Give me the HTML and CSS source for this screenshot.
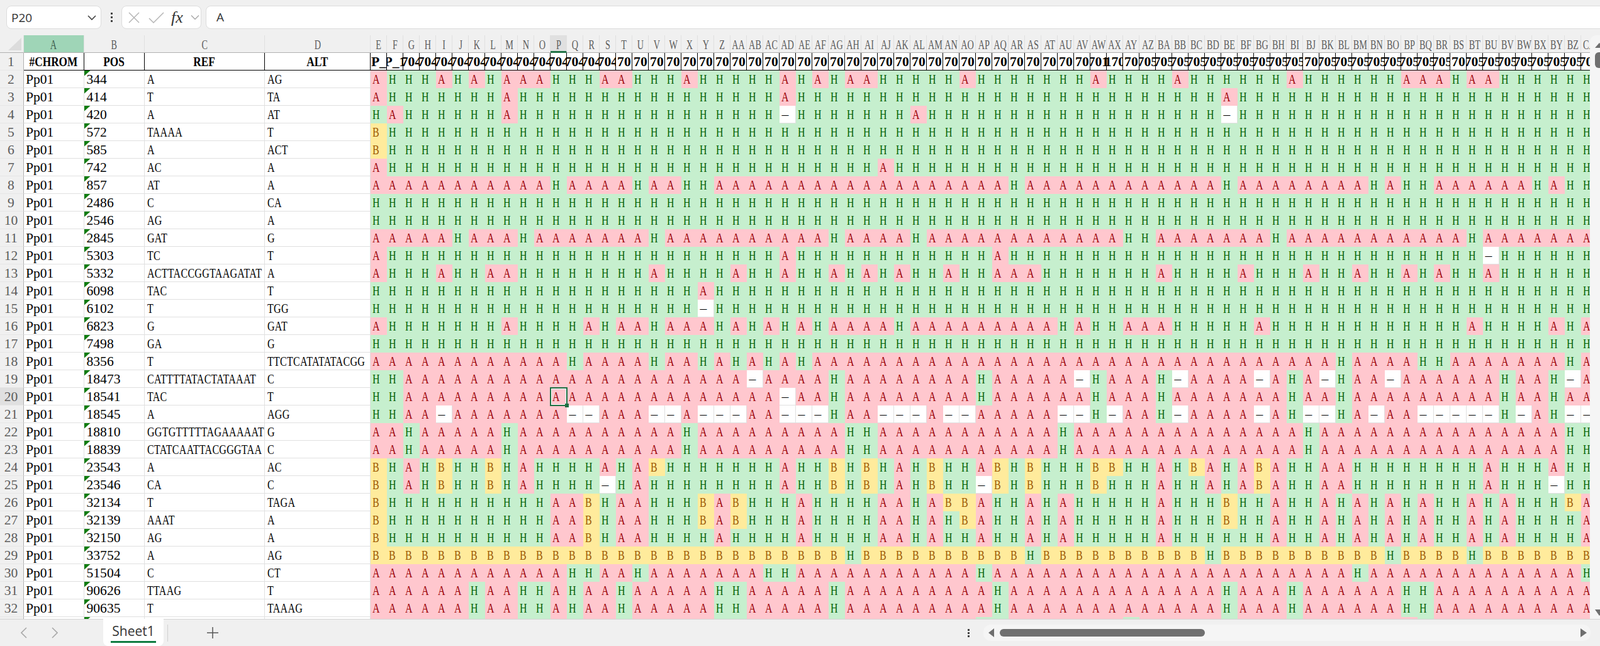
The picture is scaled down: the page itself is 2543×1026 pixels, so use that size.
FILE: index.html
```html
<!DOCTYPE html>
<html lang="en">
<head>
    <meta charset="UTF-8">
    <title>Sheet1</title>
    <link rel="stylesheet" href="styles.css">
</head>
<body>
    <div class="formula-bar">
        <div class="name-box">
            <span>P20</span>
            <svg class="chev" width="16" height="10" viewBox="0 0 16 10"><path d="M2 2l6 6 6-6" fill="none" stroke="#444" stroke-width="1.6"/></svg>
        </div>
        <div class="dots"><i></i><i></i><i></i></div>
        <div class="fx-box">
            <svg width="18" height="18" viewBox="0 0 18 18"><path d="M1 1l16 16M17 1L1 17" fill="none" stroke="#b5b5b5" stroke-width="1.5"/></svg>
            <svg width="25" height="18" viewBox="0 0 25 18"><path d="M1 10l7 7L24 1" fill="none" stroke="#b5b5b5" stroke-width="1.5"/></svg>
            <span class="fx">fx</span>
            <svg width="14" height="9" viewBox="0 0 14 9"><path d="M1 1.5l6 6 6-6" fill="none" stroke="#a8a8a8" stroke-width="1.4"/></svg>
        </div>
        <div class="formula">A</div>
    </div>

    <div class="work">
        <div class="sheet" id="sheet"></div>
        <div class="vbar">
            <svg width="14" height="8" viewBox="0 0 14 8"><path d="M7 0l7 8H0z" fill="#6f6f6f"/></svg>
            <div class="vthumb"></div>
            <svg class="vdown" width="14" height="10" viewBox="0 0 14 10"><path d="M0 0h14L7 10z" fill="#6f6f6f"/></svg>
        </div>
    </div>

    <div class="tab-bar">
        <div class="tab-nav">
            <svg width="10" height="18" viewBox="0 0 10 18"><path d="M9 1L1 9l8 8" fill="none" stroke="#a8a8a8" stroke-width="1.6"/></svg>
            <svg width="10" height="18" viewBox="0 0 10 18"><path d="M1 1l8 8-8 8" fill="none" stroke="#a8a8a8" stroke-width="1.6"/></svg>
        </div>
        <div class="tab">Sheet1</div>
        <div class="tab-sep"></div>
        <svg class="plus" width="18" height="18" viewBox="0 0 18 18"><path d="M9 0v18M0 9h18" fill="none" stroke="#555" stroke-width="1.5"/></svg>
        <div class="dots dots-small"><i></i><i></i><i></i></div>
        <div class="hbar">
            <svg width="10" height="14" viewBox="0 0 10 14"><path d="M9 0v14L0 7z" fill="#6f6f6f"/></svg>
            <div class="hthumb"></div>
            <svg width="10" height="14" viewBox="0 0 10 14"><path d="M0 0v14l10-7z" fill="#6f6f6f"/></svg>
        </div>
    </div>

    <script src="sheet.js"></script>
</body>
</html>
```

FILE: styles.css
```css
* {
    box-sizing: border-box;
}
html, body {
    height: 100%;
}
body {
    margin: 0;
    display: flex;
    flex-direction: column;
    overflow: hidden;
    background: #f0f0f0;
    font-family: "Open Sans", sans-serif;
}

/* top bar */
.formula-bar {
    height: 56px;
    flex: none;
    display: flex;
    padding: 9px 0 10px 10px;
}
.name-box, .fx-box, .formula {
    background: #fff;
    border: 1px solid #dcdcdc;
    border-radius: 8px;
}
.name-box {
    width: 151px;
    display: flex;
    align-items: center;
    justify-content: space-between;
    padding: 0 6px 0 7px;
    font-size: 19px;
    color: #333;
}
.dots {
    width: 32px;
    display: flex;
    flex-direction: column;
    align-items: center;
    justify-content: center;
    gap: 3px;
}
.dots i {
    width: 3px;
    height: 3px;
    background: #444;
}
.fx-box {
    width: 127px;
    display: flex;
    align-items: center;
    padding-left: 10px;
}
.fx-box svg:nth-child(2) {
    margin-left: 14px;
}
.fx {
    margin-left: 11px;
    width: 31px;
    font: italic 26px "Liberation Serif", serif;
    color: #333;
}
.formula {
    flex: 1;
    margin-left: 7px;
    margin-right: -10px;
    padding-left: 16px;
    line-height: 34px;
    font-size: 19px;
    color: #333;
}

/* grid */
.work {
    flex: 1;
    min-height: 0;
    display: flex;
}
.sheet {
    width: 2527px;
    flex: none;
    overflow: hidden;
    display: grid;
    grid-template-columns: 38px 95.5px 96px 191.5px 168.4px repeat(75, 26px);
    grid-auto-rows: 28px;
    align-content: start;
    font-family: "Liberation Serif", serif;
    font-size: 21.6px;
    color: #000;
}
.cell {
    position: relative;
    overflow: hidden;
    white-space: nowrap;
    padding: 2px 0 0 3px;
    line-height: 25px;
    background: #fff;
    border-right: 1px solid #e0e0e0;
    border-bottom: 1px solid #e0e0e0;
}
.nar {
    display: inline-block;
    transform: scaleX(.74);
    transform-origin: 0 50%;
}
.num {
    padding-left: 4px;
}
.seq .nar {
    letter-spacing: .4px;
}
.flag::before {
    content: "";
    position: absolute;
    left: 0;
    top: 0;
    width: 10px;
    height: 9px;
    background: #107c10;
    clip-path: polygon(0 0, 100% 0, 0 100%);
}
.a, .h, .b {
    border: 0;
}
.a {
    background: #ffc7ce;
    color: #9c0006;
}
.h {
    background: #c6efce;
    color: #006100;
}
.b {
    background: #ffeb9c;
    color: #9c5700;
}
.sel {
    overflow: visible;
    z-index: 2;
}
.sel::before {
    content: "";
    position: absolute;
    left: -1px;
    top: -1px;
    right: -1px;
    bottom: -1px;
    border: 2px solid #1d6f42;
    box-shadow: inset 0 0 0 1px #fff;
}
.sel::after {
    content: "";
    position: absolute;
    right: -3px;
    bottom: -3px;
    width: 6px;
    height: 6px;
    background: #1d6f42;
    border: 0;
}

/* headers */
.corner, .colhead, .rowhead {
    background: #f0f0f0;
    color: #5c5c5c;
}
.corner {
    border-right: 1px solid #e2e2e2;
    border-bottom: 1px solid #b0b0b0;
    position: relative;
}
.corner::after {
    content: "";
    position: absolute;
    right: 3px;
    bottom: 3px;
    width: 21px;
    height: 20px;
    background: #dcdcdc;
    clip-path: polygon(100% 0, 100% 100%, 0 100%);
}
.colhead {
    overflow: hidden;
    display: flex;
    justify-content: center;
    line-height: 25px;
    padding-top: 3px;
    white-space: nowrap;
    border-right: 1px solid #e0e0e0;
    border-bottom: 1px solid #b0b0b0;
}
.colhead .nar {
    transform: scaleX(.66);
    transform-origin: 50% 50%;
}
.colhead.hl {
    background: #9fd5b7;
    color: #3f5f4e;
}
.colhead.on {
    background: #e0e0e0;
    border-bottom: 3px solid #217346;
}
.rowhead {
    text-align: center;
    line-height: 25px;
    padding: 2px 2px 0 0;
    border-right: 1px solid #b0b0b0;
    border-bottom: 1px solid #e6e6e6;
}
.rowhead.on {
    background: #e0e0e0;
}
.title {
    overflow: hidden;
    display: flex;
    justify-content: center;
    white-space: nowrap;
    font-weight: bold;
    line-height: 25px;
    padding-top: 2px;
    background: #fff;
    border-right: 1px solid #000;
    border-bottom: 1px solid #000;
}
.title .nar {
    transform: scaleX(.8);
    transform-origin: 50% 50%;
}

/* right scrollbar */
.vbar {
    width: 16px;
    flex: none;
    overflow: hidden;
    display: flex;
    flex-direction: column;
    padding: 12px 0 5px 8px;
    background: #f5f5f5;
    border-top-left-radius: 10px;
}
.vbar svg {
    flex: none;
}
.vthumb {
    width: 16px;
    height: 25px;
    flex: none;
    margin-top: 7px;
    border-radius: 6px;
    background: #6f6f6f;
}
.vdown {
    margin-top: auto;
}

/* bottom bar */
.tab-bar {
    height: 43px;
    flex: none;
    display: flex;
    align-items: center;
    border-top: 1px solid #d4d4d4;
}
.tab-nav {
    width: 164px;
    display: flex;
    justify-content: flex-start;
    gap: 39px;
    padding-left: 33px;
}
.tab {
    width: 96px;
    height: 43px;
    margin-top: -2px;
    padding-top: 4px;
    text-align: center;
    font-size: 21px;
    line-height: 30px;
    color: #333;
    background: #fff;
    border-radius: 0 0 8px 8px;
    border-bottom: 0;
    position: relative;
}
.tab::after {
    content: "";
    position: absolute;
    left: 12px;
    right: 12px;
    bottom: 5px;
    height: 3px;
    background: #107c41;
}
.tab-sep {
    width: 1px;
    height: 27px;
    margin-left: 6px;
    background: #d0d0d0;
}
.plus {
    margin-left: 62px;
}
.dots-small {
    width: 6px;
    margin-left: 1189px;
    gap: 2px;
}
.hbar {
    width: 965px;
    height: 26px;
    margin-left: 21px;
    display: flex;
    align-items: center;
    padding: 0 6px 0 8px;
    background: #f5f5f5;
    border-radius: 12px;
}
.hthumb {
    width: 326px;
    height: 12px;
    margin-left: 8px;
    margin-right: auto;
    border-radius: 6px;
    background: #707070;
}
```

FILE: sheet.js
```js
// row data: pos, ref, alt, most common call, then the columns that differ from it
var rows = [
    ["344", "A", "AG", "H", { A: "E I K M N O S T X AD AF AH AI AO AW BB BI BP BQ BR BT BU" }],
    ["414", "T", "TA", "H", { A: "E M AD BE" }],
    ["420", "A", "AT", "H", { A: "F M AL", "-": "AD BE" }],
    ["572", "TAAAA", "T", "H", { B: "E" }],
    ["585", "A", "ACT", "H", { B: "E" }],
    ["742", "AC", "A", "H", { A: "E AJ" }],
    ["857", "AT", "A", "A", { H: "P U X Y AR BE BN BP BQ BX BZ CA" }],
    ["2486", "C", "CA", "H", {}],
    ["2546", "AG", "A", "H", {}],
    ["2845", "GAT", "G", "A", { H: "J N V AG AL AY AZ BH BT" }],
    ["5303", "TC", "T", "H", { A: "E AD AQ", "-": "BU" }],
    ["5332", "ACTTACCGGTAAGATAT", "A", "H", { A: "E I L M V AA AD AG AI AK AN AQ AR AS BA BF BJ BM BP BR BU" }],
    ["6098", "TAC", "T", "H", { A: "Y" }],
    ["6102", "T", "TGG", "H", { "-": "Y" }],
    ["6823", "G", "GAT", "H", { A: "E M R T U W X Y AA AC AE AG AH AI AJ AL AM AN AO AP AQ AR AS AT AV AY AZ BA BG BT BY CA" }],
    ["7498", "GA", "G", "H", {}],
    ["8356", "T", "TTCTCATATATACGG", "A", { H: "Q V Y AA AC AE BL BQ BR BZ" }],
    ["18473", "CATTTTATACTATAAAT", "C", "A", { H: "E F AG AP AW BA BI BL BV BY", "-": "AB AV BB BG BK BO BZ" }],
    ["18541", "TAC", "T", "A", { H: "E F AG AP AW BA BI BL BV BY", "-": "AD" }],
    ["18545", "A", "AGG", "A", { H: "E F AG AW BA BI BL BV BY", "-": "I Q R V W Y Z AA AD AE AF AJ AK AL AN AO AU AV AX BB BG BJ BK BN BQ BR BS BT BU BW BZ CA" }],
    ["18810", "GGTGTTTTTAGAAAAAT", "G", "A", { H: "G M X AH AI AU BJ BZ CA" }],
    ["18839", "CTATCAATTACGGGTAA", "C", "A", { H: "G M X AH AI AU BJ BZ CA" }],
    ["23543", "A", "AC", "H", { B: "E I L V AG AI AM AQ AS AW AX BC BG", A: "G N S U AD AK AP BA BD BF BH BK BL BU BY" }],
    ["23546", "CA", "C", "H", { B: "E I L AG AI AM AQ AS AW BG", A: "G N U AD AK BA BD BF BH BK BL BU", "-": "S AP BY" }],
    ["32134", "T", "TAGA", "H", { B: "E R Y AA AN AO BE BZ", A: "P Q T U Z AE AJ AK AM AP AS AU BA BH BK BM BO BQ BT BV CA" }],
    ["32139", "AAAT", "A", "H", { B: "E R Y AA AO BE", A: "P Q T U Z AE AJ AK AM AP AS AU BA BH BK BM BO BQ BT BV CA" }],
    ["32150", "AG", "A", "H", { B: "E R", A: "P Q T U Z AE AJ AK AM AP AS AU BA BH BK BM BO BQ BT BV CA" }],
    ["33752", "A", "AG", "B", { H: "AH AS BD BO BT" }],
    ["51504", "C", "CT", "A", { H: "Q R U AC AD AP BM CA" }],
    ["90626", "TTAAG", "T", "A", { H: "K N O Q T Z AA AG AQ BE BI BP BQ" }],
    ["90635", "T", "TAAAG", "A", { H: "K N O Q T Z AA AG AQ BE BI BP BQ" }],
    ["", "", "", "A", { H: "K N O Q T Z AA AG AP AQ AY BE BI BQ" }]
];

var firstCols = ["A", "B", "C", "D"];
var callCols = [];

function colName(i) {
    var s = String.fromCharCode(65 + i % 26);
    return i < 26 ? s : String.fromCharCode(64 + Math.floor(i / 26)) + s;
}

for (var i = 4; i <= 78; i++) {
    callCols.push(colName(i));
}

// what shows of the sample names in row 1, cut off by the narrow columns
function titleFor(col) {
    var i = callCols.indexOf(col);
    if (col == "E") return "P_";
    if (col == "F") return "P_1";
    if (i <= callCols.indexOf("S")) return "704";
    if (i <= callCols.indexOf("AV")) return "70";
    if (col == "AW") return "701";
    if (col == "AX") return "170";
    if (col == "AY" || col == "BJ" || col == "BS") return "70";
    return "705";
}

var sheet = document.getElementById("sheet");

function add(cls, text, narrow) {
    var d = document.createElement("div");
    d.className = cls;
    if (narrow) {
        var s = document.createElement("span");
        s.className = "nar";
        s.textContent = text;
        d.appendChild(s);
    } else if (text) {
        d.textContent = text;
    }
    sheet.appendChild(d);
    return d;
}

// column letters
add("corner");
firstCols.concat(callCols).forEach(function (c) {
    var cls = "colhead";
    if (c == "A") cls += " hl";
    if (c == "P") cls += " on";
    add(cls, c, true);
});

// row 1
add("rowhead", "1");
add("title", "#CHROM", true);
add("title", "POS", true);
add("title", "REF", true);
add("title", "ALT", true);
callCols.forEach(function (c) {
    add("title", titleFor(c));
});

// data rows
rows.forEach(function (r, idx) {
    var num = idx + 2;
    var blank = r[0] === "";
    var over = {};
    Object.keys(r[4]).forEach(function (call) {
        r[4][call].split(" ").forEach(function (c) {
            over[c] = call;
        });
    });

    add("rowhead" + (num == 20 ? " on" : ""), blank ? "" : String(num));
    add("cell", blank ? "" : "Pp01");
    add("cell num flag", r[0]);
    add("cell num seq", r[1], true);
    add("cell num seq", r[2], true);

    callCols.forEach(function (c) {
        var call = over[c] || r[3];
        var cls = "cell";
        if (call != "-") cls += " " + call.toLowerCase();
        if (c == "P" && num == 20) cls += " sel";
        var shown = call == "-" ? "\u2013" : call;
        add(cls, blank ? "" : shown, !blank && call != "-");
    });
});
```
